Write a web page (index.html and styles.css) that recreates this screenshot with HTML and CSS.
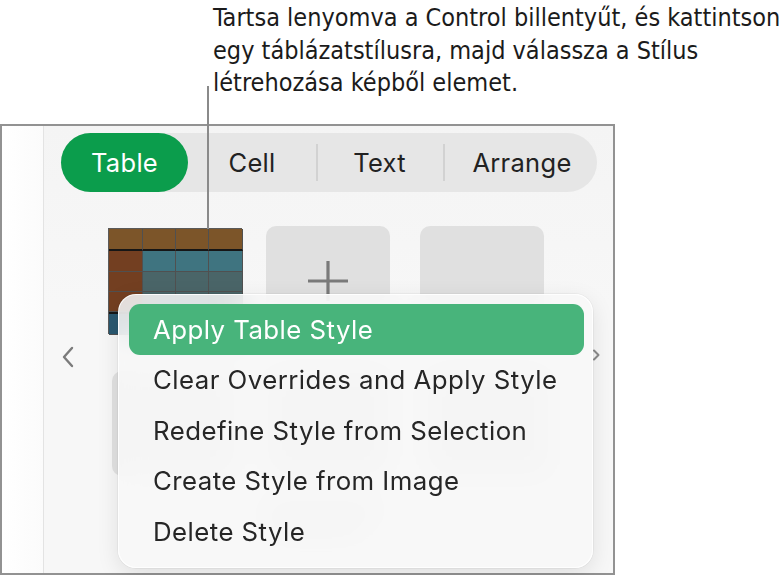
FILE: index.html
```html
<!DOCTYPE html>
<html>
<head>
<meta charset="utf-8">
<link rel="stylesheet" href="styles.css">
</head>
<body>
<div class="callout">
  <p class="callout-text">Tartsa lenyomva a Control billentyűt, és kattintson egy táblázatstílusra, majd válassza a Stílus létrehozása képből elemet.</p>
  <div class="callout-line"></div>
</div>
<div class="panel">
  <div class="sidebar"></div>
  <div class="main">
    <div class="tabs">
      <div class="tab active">Table</div>
      <div class="tab">Cell</div>
      <div class="tab sep">Text</div>
      <div class="tab sep">Arrange</div>
    </div>
    <div class="tiles">
      <div class="thumb">
        <div class="c h"></div><div class="c h"></div><div class="c h"></div><div class="c h"></div>
        <div class="c f"></div><div class="c b1"></div><div class="c b1"></div><div class="c b1"></div>
        <div class="c f"></div><div class="c b2"></div><div class="c b2"></div><div class="c b2"></div>
        <div class="c f"></div><div class="c b2"></div><div class="c b2"></div><div class="c b2"></div>
        <div class="c ft"></div><div class="c ft"></div><div class="c ft"></div><div class="c ft"></div>
      </div>
      <div class="tile add">
        <svg width="40" height="40" viewBox="0 0 40 40"><path d="M20 0V40M0 20H40" stroke="#7a7a7a" stroke-width="3.2"/></svg>
      </div>
      <div class="tile"></div>
    </div>
    <div class="tiles row2">
      <div class="tile small"></div>
      <div class="tile small"></div>
      <div class="tile small"></div>
    </div>
    <div class="labels">
      <div class="blur-bar"></div>
      <div class="blur-bar short"></div>
    </div>
  </div>
  <svg class="chev left" width="14" height="22" viewBox="0 0 14 22"><path d="M11 2L3 11L11 20" fill="none" stroke="#7b7b7b" stroke-width="2.4" stroke-linecap="round" stroke-linejoin="round"/></svg>
  <svg class="chev right" width="8" height="12" viewBox="0 0 8 12"><path d="M2 1.5L6.5 6L2 10.5" fill="none" stroke="#8a8a8a" stroke-width="2" stroke-linecap="round" stroke-linejoin="round"/></svg>
  <div class="menu">
    <div class="item selected">Apply Table Style</div>
    <div class="item">Clear Overrides and Apply Style</div>
    <div class="item">Redefine Style from Selection</div>
    <div class="item">Create Style from Image</div>
    <div class="item">Delete Style</div>
  </div>
</div>
</body>
</html>
```
FILE: styles.css
```css
* { box-sizing: border-box; }
html, body { margin: 0; padding: 0; background: #fff; }
body { width: 782px; height: 575px; overflow: hidden; font-family: Inter, "Noto Sans", sans-serif; }

.callout { position: relative; height: 124px; }
.callout-text {
  margin: 0;
  padding: 2px 0 0 213px;
  width: 782px;
  font-family: "Liberation Sans Narrow", "DejaVu Sans Condensed", "Liberation Sans", sans-serif;
  font-size: 25px;
  line-height: 32.5px;
  color: #1b1b1b;
}
.callout-line {
  position: absolute;
  left: 207px;
  top: 86px;
  width: 2px;
  height: 143px;
  background: #8a8a8a;
  z-index: 5;
}

.panel {
  position: relative;
  width: 615px;
  height: 451px;
  border: 2px solid #929292;
  display: flex;
  background: #f6f6f6;
}
.sidebar {
  width: 42px;
  background: linear-gradient(90deg, #ffffff 0%, #fbfbfb 100%);
  border-right: 1.5px solid #e3e3e3;
}
.main {
  flex: 1;
  padding: 7px 0 0 17px;
  background: linear-gradient(180deg, #f4f4f4 0%, #f7f7f7 40%);
}

.tabs {
  display: grid;
  grid-template-columns: 127px 128px 127px 154px;
  width: 536px;
  height: 59px;
  background: #e6e6e6;
  border-radius: 30px;
}
.tab {
  position: relative;
  display: flex;
  align-items: center;
  justify-content: center;
  font-size: 25.5px;
  color: #222;
  letter-spacing: 0.3px;
}
.tab.sep::before {
  content: "";
  position: absolute;
  left: 0;
  top: 11px;
  bottom: 11px;
  width: 2px;
  background: #d2d2d2;
}
.tab:last-child { padding-left: 4px; }
.tab.active {
  background: #0b9d4c;
  color: #fff;
  border-radius: 30px;
}

.tiles {
  display: flex;
  gap: 24px;
  margin: 34px 0 0 47px;
  align-items: flex-start;
}
.thumb {
  width: 134px;
  height: 106px;
  margin-top: 2px;
  display: grid;
  grid-template-columns: 34px 33px 33px 34px;
  grid-template-rows: 22px 21px 20px 20px 23px;
  background: #555;
  border: 1px solid #5a5a5a;
}
.c { border-right: 1px solid #505050; border-bottom: 1px solid #505050; }
.c.h { background: #7c5529; border-bottom: 2px solid #161616; }
.c.f { background: #733f21; }
.c.b1 { background: #3f7480; }
.c.b2 { background: #4a6568; }
.c.ft { background: #2a5870; border-top: 2px solid #161616; }
.tile {
  width: 124px;
  height: 106px;
  border-radius: 10px;
  background: #e0e0e0;
  display: flex;
  align-items: center;
  justify-content: center;
}
.tile.add svg { margin-top: 4px; }
.tiles .tile:last-child { margin-left: 6px; }

.row2 { margin-top: 37px; margin-left: 51px; gap: 30px; }
.tile.small { height: 105px; background: #e2e2e2; }
.labels { margin: 28px 0 0 200px; display: flex; flex-direction: column; gap: 8px; }
.blur-bar { width: 120px; height: 12px; background: #d4d4d4; border-radius: 6px; filter: blur(4px); }
.blur-bar.short { width: 90px; margin-left: 10px; }

.chev { position: absolute; }
.chev.left { left: 59px; top: 220px; }
.chev.right { left: 590px; top: 223px; }

.menu {
  position: absolute;
  left: 116px;
  top: 168px;
  width: 475px;
  height: 274px;
  padding: 9px 8px 0 10px;
  border-radius: 18px;
  background: rgba(248, 248, 248, 0.86);
  backdrop-filter: blur(14px);
  border: 1px solid rgba(255,255,255,0.9);
  box-shadow: 0 0 0 1px rgba(0,0,0,0.04), 0 6px 22px rgba(0,0,0,0.10);
  z-index: 10;
}
.item {
  height: 50.5px;
  display: flex;
  align-items: center;
  padding-left: 24px;
  font-size: 25.8px;
  color: #262626;
  letter-spacing: 0.45px;
}
.item.selected {
  background: #48b47b;
  color: #fff;
  border-radius: 11px;
}
```
